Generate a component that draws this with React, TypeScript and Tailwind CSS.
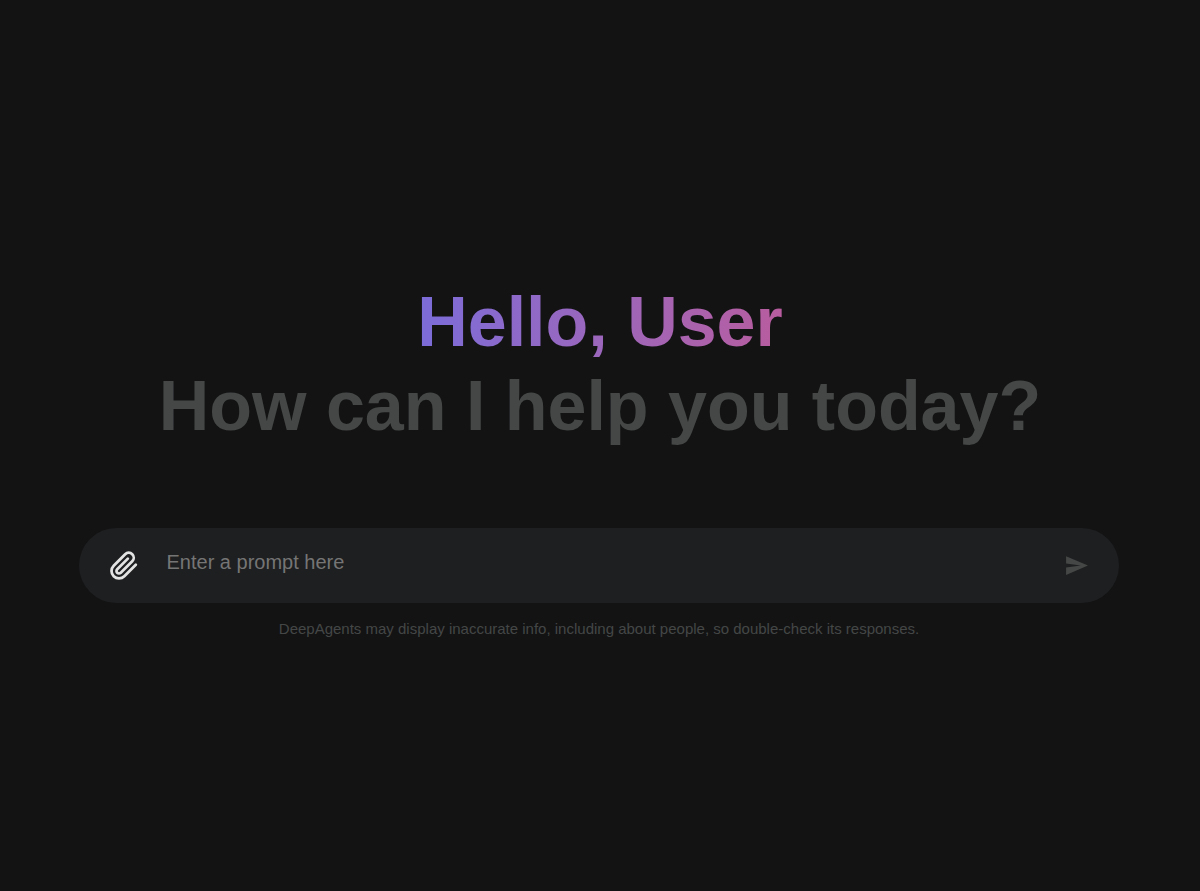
import React, { useState } from 'react';
import { FiPaperclip } from 'react-icons/fi';

const SendIcon: React.FC = () => (
    <svg viewBox="0 0 24 24" className="h-[25px] w-[25px]" fill="currentColor">
        <path d="M2 3 23 12 2 21v-7l14-2-14-2z" />
    </svg>
);

interface GreetingProps {
    name: string;
}
const Greeting: React.FC<GreetingProps> = ({ name }) => (
    <div className="text-center text-[70px] font-bold leading-[84px] tracking-[-0.02px]">
        <h1 className="mx-auto w-fit bg-gradient-to-r from-[#7b6cd9] to-[#b85c9e] bg-clip-text text-transparent">Hello, {name}</h1>
        <h2 className="whitespace-nowrap text-[#444746]">How can I help you today?</h2>
    </div>
);

const PromptBar: React.FC = () => {
    const [prompt, setPrompt] = useState('');

    return (
        <form
            onSubmit={(e) => e.preventDefault()}
            className="flex h-[75px] w-[1040px] items-center rounded-full bg-[#1e1f20] px-[30px]"
        >
            <button type="button" aria-label="Attach file" className="mt-px text-[#e3e3e3]">
                <FiPaperclip size={30} strokeWidth={2.2} />
            </button>
            <input
                value={prompt}
                onChange={(e) => setPrompt(e.target.value)}
                placeholder="Enter a prompt here"
                className="mb-[7px] ml-[27.5px] flex-1 bg-transparent text-[20px] text-[#e3e3e3] outline-none placeholder:text-[#757575]"
            />
            <button type="submit" aria-label="Send" className="text-[#444746]">
                <SendIcon />
            </button>
        </form>
    );
};

export default function App() {
    return (
        <div className="flex min-h-screen flex-col items-center bg-[#131314] pt-[280px] font-['Liberation_Sans',Arial,sans-serif]">
            <Greeting name="User" />
            <div className="mr-[2px] mt-[80px] flex flex-col items-center">
                <PromptBar />
                <p className="mt-[15px] text-[15px] leading-[22px] text-[#444746]">
                    DeepAgents may display inaccurate info, including about people, so double-check its responses.
                </p>
            </div>
        </div>
    );
}
